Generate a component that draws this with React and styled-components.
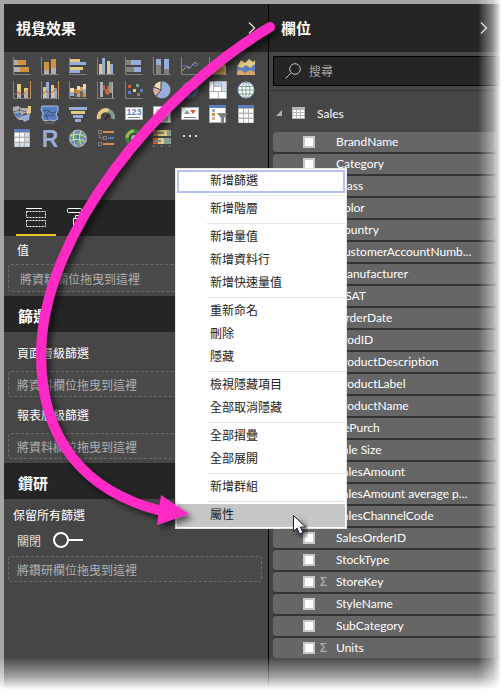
import React from 'react';
import styled, { createGlobalStyle } from 'styled-components';

const Global = createGlobalStyle`
  * { box-sizing: border-box; }
  body { margin: 0; background: #fff; }
  body, button, input {
    font-family: Lato, "Noto Sans CJK TC", sans-serif;
    font-size: 12px;
  }
  h2, ul { margin: 0; padding: 0; }
  ul { list-style: none; }
  svg { display: block; }
`;

const Page = styled.div`
  position: relative;
  min-height: 100vh;
  padding: 4px 4px 0 4px;
  display: grid;
  grid-template-columns: minmax(0, 264fr) minmax(0, 232fr);
  background: #a6a6a6;
  overflow: hidden;
`;

const Panel = styled.section`
  background: #464646;
  color: #fff;
  border-left: ${(p) => (p.$divided ? '1px solid #000' : 'none')};
`;

const PanelHeader = styled.header`
  height: 48px;
  padding: 0 12px;
  display: flex;
  align-items: center;
  justify-content: space-between;
  background: #252525;
`;

const Title = styled.h2`
  font-size: 15px;
  line-height: 20px;
  font-weight: 700;
  font-family: "Noto Sans CJK TC", sans-serif;
`;

const Collapse = styled.button`
  padding: 0;
  border: 0;
  background: none;
`;

const Gallery = styled.ul`
  height: 148px;
  padding: 5px 9px;
  display: grid;
  grid-template-columns: repeat(9, 18px);
  grid-auto-rows: 18px;
  gap: 6px 10px;
  align-content: start;
`;

const IconButton = styled.button`
  display: block;
  width: 18px;
  height: 18px;
  padding: 0;
  border: 0;
  background: none;
`;

const Tabs = styled.div`
  height: 36px;
  padding: 0 12px;
  display: flex;
  background: #252525;
`;

const Tab = styled.button`
  width: 40px;
  padding: 6px 0 0;
  display: flex;
  align-items: flex-start;
  justify-content: center;
  border: 0;
  border-bottom: 2px solid ${(p) => (p.$active ? '#e8c928' : 'transparent')};
  background: none;
`;

const Band = styled.div`
  height: 36px;
  padding: 4px 14px 0;
  display: flex;
  align-items: center;
  background: #252525;
`;

const Group = styled.div`
  padding: ${(p) => p.$top}px 6px 4px 4px;
  display: flex;
  flex-direction: column;
`;

const Label = styled.div`
  padding: 0 ${(p) => (p.$outdent ? 5 : 9)}px;
  margin-bottom: ${(p) => p.$gap}px;
  font-size: 12px;
  line-height: 20px;
  color: #fff;
`;

const DropZone = styled.div`
  height: ${(p) => (p.$tall ? 28 : 26)}px;
  padding: 0 ${(p) => (p.$tall ? 11 : 8)}px;
  margin-bottom: ${(p) => (p.$spaced ? 9 : 0)}px;
  display: flex;
  align-items: center;
  border: 1px dashed #6c6c6c;
  border-radius: 3px;
  background: #4a4a4a;
  color: #b0b0b0;
`;

const ToggleRow = styled.label`
  height: 20px;
  padding: 0 9px;
  margin-bottom: 6px;
  display: flex;
  align-items: center;
  gap: 12px;
  color: #ddd;
`;

const Toggle = styled.input`
  appearance: none;
  margin: 0;
  width: 30px;
  height: 12px;
  display: flex;
  align-items: center;
  &::before {
    content: '';
    width: 12px;
    height: 12px;
    border: 2px solid #fff;
    border-radius: 50%;
  }
  &::after {
    content: '';
    flex: 1;
    height: 2px;
    background: #fff;
  }
`;

const SearchArea = styled.div`
  padding: 4px 0 4px 4px;
  border-bottom: 1px solid #333;
`;

const SearchBox = styled.label`
  height: 30px;
  padding: 0 11px;
  display: flex;
  align-items: center;
  gap: 8px;
  border: 1px solid #000;
  background: #252525;
`;

const SearchInput = styled.input`
  flex: 1;
  min-width: 0;
  padding: 0;
  border: 0;
  outline: 0;
  background: none;
  color: #fff;
  &::placeholder { color: #a6a6a6; opacity: 1; }
`;

const TableHead = styled.div`
  height: 41px;
  padding: 3px 7px 0;
  display: flex;
  align-items: center;
  color: #fff;
`;

const TableIcon = styled.div`
  margin: 0 12px 0 10px;
`;

const Fields = styled.ul`
  margin-left: 4px;
  margin-right: 4px;
  display: flex;
  flex-direction: column;
  gap: 2px;
  background: #353535;
`;

const Field = styled.li`
  height: 20px;
  border-radius: 3px;
  background: #666;
`;

const FieldLabel = styled.label`
  height: 20px;
  padding-left: 30px;
  display: grid;
  grid-template-columns: 12px 21px 1fr;
  align-items: center;
  line-height: 20px;
  white-space: nowrap;
`;

const Check = styled.input`
  appearance: none;
  margin: 0;
  width: 12px;
  height: 12px;
  border: 2px solid #c8c8c8;
  background: #fff;
`;

const Sigma = styled.span`
  padding-left: 5px;
  font-family: "Open Sans", sans-serif;
  font-weight: 600;
  color: #b0b0b0;
`;

const Menu = styled.div`
  position: absolute;
  left: 175px;
  top: 168px;
  width: 172px;
  padding: 1px;
  border: 1px solid #e4e4e4;
  background: #fff;
`;

const MenuItem = styled.button`
  display: block;
  width: 100%;
  height: 23px;
  padding: 0 0 2px 31px;
  border: 2px solid ${(p) => (p.$focused ? '#b4c0f6' : 'transparent')};
  background: ${(p) => (p.$hovered ? '#c6c6c6' : '#fff')};
  color: #222;
  line-height: 18px;
  text-align: left;
`;

const Rule = styled.hr`
  height: 1px;
  margin: 2px 0 2px 30px;
  border: 0;
  background: #e2e2e2;
`;

const Overlay = styled.svg`
  position: absolute;
  left: 0;
  top: 0;
  pointer-events: none;
`;

const FadeRight = styled.div`
  position: absolute;
  top: 0;
  right: 0;
  bottom: 0;
  width: 26px;
  pointer-events: none;
  background: linear-gradient(to right, transparent, rgba(255, 255, 255, 0.45) 55%, #fff 90%);
`;

const FadeBottom = styled.div`
  position: absolute;
  left: 0;
  right: 0;
  bottom: 0;
  height: 36px;
  pointer-events: none;
  background: linear-gradient(to bottom, transparent, rgba(255, 255, 255, 0.5) 55%, #fff 90%);
`;

const O = '#d2913f';
const G = '#b0b0b0';
const B = '#97acd8';
const Y = '#e2c97f';
const D = '#808080';
const DB = '#5b7dbd';
const T = '#80a18e';
const R = '#c4623d';

/* each entry: x, y, width, height, colour */
const rects = (list) => list.map(([x, y, w, h, c], i) => (
  <rect key={i} x={x} y={y} width={w} height={h} fill={c} />
));
const axis = <path d="M.5 0V17.5H18" stroke={D} fill="none" />;
const grid = (tint) => (
  <>
    {rects([[1, 0, 16, 18, G], [1, 0, 16, 3, DB]])}
    {[0, 1, 2].map((r) => [0, 1, 2].map((c) => (
      <rect key={`${r}${c}`} x={2 + c * 5} y={4 + r * 5} width="4" height="3.6"
        fill={tint && (c === 2 || r === 2) ? '#d3dcee' : '#fff'} />
    )))}
  </>
);

const icons = [
  ['堆疊橫條圖', <>{axis}{rects([[1, 3, 4, 5, G], [5, 3, 8, 5, O], [1, 10, 6, 5, G], [7, 10, 9, 5, O]])}</>],
  ['堆疊直條圖', <>{axis}{rects([[3, 5, 5, 8, O], [3, 13, 5, 4, G], [10, 2, 5, 9, O], [10, 11, 5, 6, G]])}</>],
  ['群組橫條圖', <>{axis}{rects([[1, 2, 10, 3, Y], [1, 5, 16, 3, B], [1, 10, 13, 3, Y], [1, 13, 10, 3, B]])}</>],
  ['群組直條圖', <>{axis}{rects([[2, 7, 3, 10, Y], [5, 1, 3, 16, B], [10, 4, 3, 13, Y], [13, 7, 3, 10, B]])}</>],
  ['百分比橫條圖', <>{axis}{rects([[1, 3, 5, 5, D], [6, 3, 10, 5, B], [1, 10, 8, 5, D], [9, 10, 7, 5, B]])}</>],
  ['百分比直條圖', <>{axis}{rects([[3, 2, 5, 6, B], [3, 8, 5, 9, D], [11, 2, 5, 10, B], [11, 12, 5, 5, D]])}</>],
  ['折線圖', <>{axis}<path d="M1 14L6 9L9 11L14 5L17 8" stroke="#c4a091" fill="none" /><path d="M1 10L4 8L8 12L12 8L15 9L18 6" stroke={DB} fill="none" /></>],
  ['區域圖', <>{axis}<path d="M1 17V9L6 3L10 8L14 5L17 9V17Z" fill={Y} /><path d="M1 17V14L7 9L17 13V17Z" fill="#d29c56" /></>],
  ['堆疊區域圖', <><path d="M0 10L4 3L8 6L12 2L16 5L18 3V18H0Z" fill={Y} /><path d="M0 9L5 11L9 8L13 11L18 7V18H0Z" fill={DB} /><path d="M0 14L4 13L8 16L13 13L18 15V18H0Z" fill="#d8a467" /></>],
  ['折線與堆疊直條圖', <>{axis}{rects([[4, 3, 4, 8, Y], [4, 11, 4, 6, G], [11, 7, 4, 4, Y], [11, 11, 4, 6, G], [17, 0, 1, 17, O]])}<path d="M1 14L5 11L9 14L16 8" stroke={R} fill="none" /></>],
  ['折線與群組直條圖', <>{axis}{rects([[2, 6, 3, 11, Y], [5, 1, 3, 16, B], [10, 4, 3, 13, Y], [13, 7, 3, 10, B], [17, 0, 1, 17, O]])}<path d="M1 14L5 10L9 13L16 7" stroke={R} fill="none" /></>],
  ['緞帶圖', <>{axis}{rects([[1, 7, 4, 4, '#f0dcae'], [1, 11, 4, 4, B], [5, 8, 3, 4, '#b58545'], [5, 12, 3, 4, '#6b5d4a'], [8, 5, 3, 4, '#f0dcae'], [8, 9, 3, 4, '#c98946'], [8, 13, 3, 3, B], [11, 6, 3, 4, '#c9a665'], [11, 10, 3, 6, '#75624b'], [14, 3, 3, 5, '#f0dcae'], [14, 8, 3, 4, B], [14, 12, 3, 4, O]])}</>],
  ['瀑布圖', <>{axis}{rects([[3, 1, 3, 15, G], [6, 4, 2, 5, R], [8, 8, 2, 5, R], [10, 5, 2, 9, R], [12, 1, 3, 11, T], [15, 1, 1, 16, G]])}</>],
  ['散佈圖', <>{axis}{rects([[3, 4, 3, 3, R], [11, 3, 3, 3, T], [3, 10, 3, 3, DB], [8, 8, 3, 3, Y], [15, 8, 3, 3, DB], [12, 12, 3, 3, D]])}</>],
  ['圓形圖', <><circle cx="9" cy="9" r="8.5" fill={B} /><path d="M8 9V.5A8.5 8.5 0 0 0 1 6Z" fill="#f0dcae" /><path d="M8 9L1 6A8.5 8.5 0 0 0 3 15Z" fill="#dab09a" /><path d="M8 .5V9L3 15M8 9L1 6" stroke="#464646" fill="none" /></>],
  ['環圈圖', <><circle cx="9" cy="9" r="6.5" stroke="#526f9f" strokeWidth="4" fill="none" /><path d="M9 1V6M3 14L6 11" stroke="#34496d" /></>],
  ['樹狀圖', <>{rects([[0, 0, 18, 18, G], [1, 1, 3, 9, '#fff'], [5, 1, 7, 4, '#c4d0e8'], [13, 1, 4, 9, '#d3dcee'], [5, 6, 7, 4, '#fff'], [1, 11, 8, 6, '#fff'], [10, 11, 7, 6, '#fff']])}</>],
  ['地圖', <><circle cx="9" cy="9" r="8" fill="#fff" stroke={B} /><path d="M9 1V17M2 5.5H16M1 9H17M2 13H16" stroke={T} fill="none" /><ellipse cx="9" cy="9" rx="4" ry="8" stroke={T} fill="none" /></>],
  ['區域分布圖', <><path d="M0 2L6 1L8 3H14V8L10 9L9 12L12 15H6L3 12L1 9L0 6Z" fill={G} /><path d="M15 1H18V8L14 10V5Z" fill={Y} /><path d="M0 8H7L8 13L4 12Z" fill={DB} /><path d="M8 11L17 9L16 15L11 17Z" fill={B} /><path d="M0 7L7 5L13 7M7 1L6 7L9 11" stroke="#464646" strokeWidth=".7" fill="none" /></>],
  ['圖形地圖', <><path d="M1 1H17V6L15 9L17 14L13 16L9 15L3 16L1 12L2 8L0 5Z" fill={DB} stroke="#a9c0df" /><path d="M2 6L7 5L10 8L15 7M8 6L5 10L7 15M3 11L14 10" stroke="#33486d" strokeWidth=".8" fill="none" /><path d="M4 18H13" stroke={D} /></>],
  ['漏斗圖', <>{rects([[0, 2, 18, 3, B], [2, 6, 14, 3, Y], [4, 10, 10, 3, B], [6, 14, 6, 3, B]])}</>],
  ['量測計', <><path d="M2 14A7 7 0 0 1 12 6" stroke={Y} strokeWidth="4" fill="none" /><path d="M12 6A7 7 0 0 1 16 14" stroke={T} strokeWidth="4" fill="none" /><path d="M8 14L12 10" stroke="#2e2e2e" strokeWidth="2" /></>],
  ['卡片', <>{rects([[0, 2, 18, 13, G], [1, 3, 16, 11, '#fff'], [3, 12, 12, 1, D]])}<text x="9" y="10" textAnchor="middle" fontFamily="Liberation Sans" fontWeight="700" fontSize="9" fill={DB}>123</text></>],
  ['多列卡片', <>{rects([[0, 1, 18, 17, G], [1, 2, 16, 15, '#fff'], [3, 4, 9, 5, '#ccc'], [3, 11, 12, 5, '#ccc']])}</>],
  ['KPI', <>{rects([[0, 2, 18, 13, G], [1, 3, 16, 11, '#fff'], [3, 12, 12, 1, D]])}<path d="M3 9L6 5L9 9Z" fill={T} /><path d="M9 5H15L12 9Z" fill={R} /></>],
  ['交叉分析篩選器', <>{rects([[0, 0, 17, 18, G], [1, 3, 15, 14, '#fff'], [0, 0, 17, 3, DB], [3, 4, 3, 3, B], [3, 8, 3, 3, O], [3, 12, 3, 3, '#dab09a']])}<path d="M8 8H19L15 13V18L12 19V13Z" fill={D} /></>],
  ['資料表', grid(false)],
  ['矩陣', grid(true)],
  ['R 指令碼視覺效果', <text x="9" y="18" textAnchor="middle" fontFamily="Liberation Sans" fontWeight="700" fontSize="23" fill={B}>R</text>],
  ['ArcGIS 地圖', <><circle cx="9" cy="9.500" r="8.500" fill="#7190a5" stroke={G} /><path d="M4 3L8 6L6 10L2 9ZM11 3L15 6L13 9L9 8ZM10 10L15 12L11 16L8 13Z" fill="#6caa55" /><path d="M3 12L7 12L7 16ZM8 5L11 8L8 12Z" fill="#3f6fb4" /><path d="M1 7Q9 3 17 8M1 12Q9 8 17 13M6 2Q2 9 7 17M12 2Q8 9 13 17" stroke="#d3d3d3" fill="none" /></>],
  ['階層篩選', <>{[1, 7, 13].map((y, i) => <g key={y}><rect x={i === 1 ? 6.5 : 1.500} y={y + 0.500} width="3" height="3" stroke={D} fill="none" /><rect x={i === 1 ? 11 : 6} y={y + 1} width={i === 1 ? 6 : 11} height="2" fill={i === 1 ? '#4d7fc0' : '#e08a45'} /></g>)}<path d="M2.500 6V9H6" stroke={D} fill="none" /></>],
  ['多環圖', <><circle cx="9" cy="9" r="7" stroke="#3f7f3c" strokeWidth="4" fill="none" /><path d="M2 9A7 7 0 0 1 9 2" stroke="#8bc34a" strokeWidth="3" fill="none" /><circle cx="9" cy="9" r="3" fill={G} /></>],
  ['子彈圖', <>{rects([[0, 1, 8, 6, '#d2763f'], [5, 1, 9, 6, Y], [14, 1, 4, 6, T], [0, 3, 11, 2, D], [0, 9, 5, 6, R], [5, 9, 6, 6, Y], [11, 9, 7, 6, T], [0, 11, 8, 2, D], [0, 16, 1, 2, D], [8, 16, 1, 2, D], [16, 16, 1, 2, D]])}</>],
  ['更多', <>{rects([[2, 6, 2, 2, '#ddd'], [8, 6, 2, 2, '#ddd'], [14, 6, 2, 2, '#ddd']])}</>],
];

const fields = [
  'BrandName', 'Category', 'Class', 'Color', 'Country', 'CustomerAccountNumb...',
  'Manufacturer', 'NSAT', 'OrderDate', 'ProdID', 'ProductDescription', 'ProductLabel',
  'ProductName', 'RePurch', 'Sale Size', 'SalesAmount', 'SalesAmount average p...',
  'SalesChannelCode', 'SalesOrderID', 'StockType', 'StoreKey', 'StyleName',
  'SubCategory', 'Units',
];
const numeric = ['StoreKey', 'Units'];

const menuGroups = [
  ['新增篩選'], ['新增階層'], ['新增量值', '新增資料行', '新增快速量值'],
  ['重新命名', '刪除', '隱藏'], ['檢視隱藏項目', '全部取消隱藏'],
  ['全部摺疊', '全部展開'], ['新增群組'], ['屬性'],
];

const Header = ({ title }) => (
  <PanelHeader>
    <Title>{title}</Title>
    <Collapse aria-label={`摺疊${title}`}>
      <svg width="8" height="12" fill="none" stroke="#d6d6d6" strokeWidth="1.400"><path d="M1 0.500L6.500 6L1 11.500" /></svg>
    </Collapse>
  </PanelHeader>
);

export default function App() {
  return (
    <>
      <Global />
      <Page>
        <Panel>
          <Header title="視覺效果" />
          <Gallery>
            {icons.map(([name, art]) => (
              <li key={name}>
                <IconButton aria-label={name}>
                  <svg width="18" height="18" overflow="visible">{art}</svg>
                </IconButton>
              </li>
            ))}
          </Gallery>
          <Tabs>
            <Tab $active aria-label="欄位">
              <svg width="20" height="22" fill="none" stroke="#fff">
                <path d="M0 2.500H16" />
                <path d="M.5 5.500H19.500V11.500H.5ZM.5 14.500H19.500V20.500H.5Z" strokeDasharray="2 1" />
              </svg>
            </Tab>
            <Tab aria-label="格式">
              <svg width="18" height="22" fill="none" stroke="#fff">
                <rect x=".5" y="2.500" width="14" height="4" rx="1" />
                <path d="M14.500 4.500H17.500V9.500H8.500V12M6.500 12.500H10.500V19.500H6.500Z" />
              </svg>
            </Tab>
          </Tabs>
          <Group $top={5}>
            <Label $gap={3}>值</Label>
            <DropZone $tall>將資料欄位拖曳到這裡</DropZone>
          </Group>
          <Band><Title>篩選</Title></Band>
          <Group $top={12}>
            <Label $gap={7}>頁面層級篩選</Label>
            <DropZone $spaced>將資料欄位拖曳到這裡</DropZone>
            <Label $gap={7}>報表層級篩選</Label>
            <DropZone>將資料欄位拖曳到這裡</DropZone>
          </Group>
          <Band><Title>鑽研</Title></Band>
          <Group $top={7}>
            <Label $gap={4} $outdent>保留所有篩選</Label>
            <ToggleRow>關閉<Toggle type="checkbox" role="switch" /></ToggleRow>
            <DropZone>將鑽研欄位拖曳到這裡</DropZone>
          </Group>
        </Panel>

        <Panel $divided>
          <Header title="欄位" />
          <SearchArea>
            <SearchBox>
              <svg width="16" height="16" fill="none" stroke="#c0c0c0"><circle cx="10" cy="6" r="5.300" /><path d="M6 10L.5 15.500" /></svg>
              <SearchInput type="search" placeholder="搜尋" aria-label="搜尋" />
            </SearchBox>
          </SearchArea>
          <TableHead>
            <svg width="6" height="6"><path d="M6 0V6H0Z" fill="#b0b0b0" /></svg>
            <TableIcon>
              <svg width="13" height="12">
                {rects([[0, 0, 13, 12, '#b4b4b4']])}
                {[0, 1, 2].map((r) => [0, 1, 2].map((c) => (
                  <rect key={`${r}${c}`} x={1 + c * 4} y={3 + r * 3} width="3" height="2" fill="#fff" />
                )))}
              </svg>
            </TableIcon>
            Sales
          </TableHead>
          <Fields>
            {fields.map((name) => (
              <Field key={name}>
                <FieldLabel>
                  <Check type="checkbox" />
                  <Sigma>{numeric.includes(name) ? 'Σ' : ''}</Sigma>
                  {name}
                </FieldLabel>
              </Field>
            ))}
          </Fields>
        </Panel>

        <FadeRight />
        <FadeBottom />
        <Menu role="menu">
          {menuGroups.map((group, i) => (
            <React.Fragment key={group[0]}>
              {i > 0 && <Rule />}
              {group.map((text) => (
                <MenuItem key={text} role="menuitem" $focused={i === 0} $hovered={text === '屬性'}>{text}</MenuItem>
              ))}
            </React.Fragment>
          ))}
        </Menu>
        <Overlay width="504" height="693" viewBox="0 0 504 693" aria-hidden="true">
          <defs>
            <filter id="soft" x="-20%" y="-20%" width="140%" height="140%">
              <feDropShadow dx="4" dy="4" stdDeviation="3" floodColor="#000" floodOpacity="0.6" />
            </filter>
          </defs>
          <g filter="url(#soft)">
            <path d="M270 27C158 93 41 235 41 355C41 440 85 492 162 511" fill="none" stroke="#ff2cc6" strokeWidth="10" strokeLinecap="round" />
            <path d="M161 495L189 514L157 525Z" fill="#ff2cc6" />
          </g>
          <path d="M293.500 515.500V531.500L297 528L299.500 534L303 532.500L300.500 527H305.500Z" fill="#fff" stroke="#1c1c30" filter="url(#soft)" />
        </Overlay>
      </Page>
    </>
  );
}
